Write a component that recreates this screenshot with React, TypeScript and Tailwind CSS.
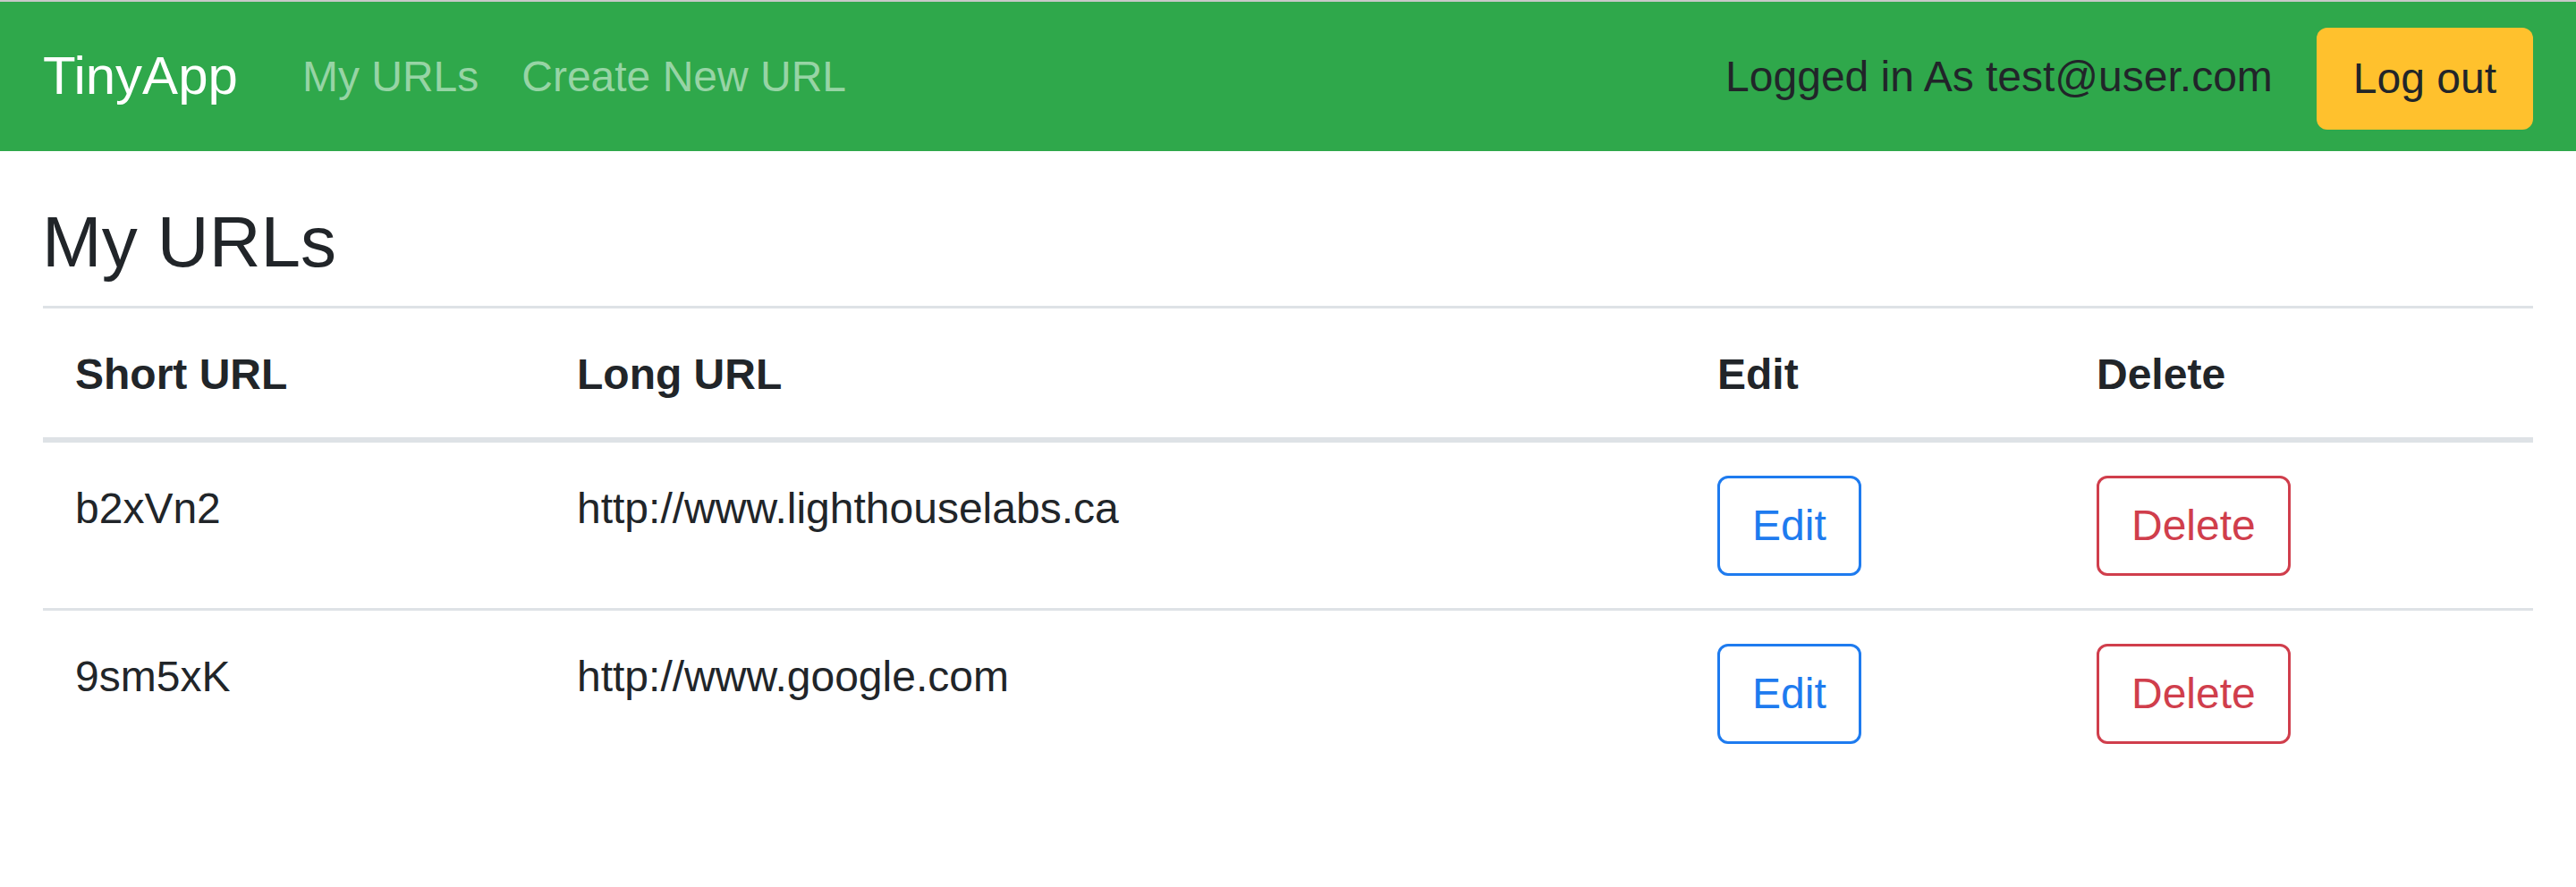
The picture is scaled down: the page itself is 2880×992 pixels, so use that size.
import React from "react";

const rows = [
  { short: "b2xVn2", long: "http://www.lighthouselabs.ca" },
  { short: "9sm5xK", long: "http://www.google.com" },
];

export default function App() {
  return (
    <div className="min-h-[992px] bg-white text-[#212529] font-['Liberation_Sans',Arial,sans-serif]">
      <nav className="h-[169px] border-t-2 border-[#c8c8c8] bg-[#2fa84b] px-[48px] flex items-center">
        <span className="text-[60px] leading-[90px] text-white mr-[48px] -mt-[2px]">TinyApp</span>
        <a className="text-[48px] leading-[72px] text-[#97d4a5] px-[24px]">My URLs</a>
        <a className="text-[48px] leading-[72px] text-[#97d4a5] px-[24px]">Create New URL</a>
        <div className="ml-auto flex items-center">
          <span className="text-[48px] leading-[72px] text-[#212529] mr-[49px]">Logged in As test@user.com</span>
          <button className="h-[114px] px-[41px] rounded-[12px] bg-[#ffc12d] text-[48px] leading-[72px] text-[#212529] mt-[4px]">
            Log out
          </button>
        </div>
      </nav>
      <main className="px-[48px] pt-[54px]">
        <h1 className="text-[80px] leading-[96px] font-normal mb-[23px] -ml-[1px]">My URLs</h1>
        <table className="w-full border-collapse text-[48px] leading-[72px]">
          <colgroup>
            <col className="w-[561px]" />
            <col className="w-[1275px]" />
            <col className="w-[424px]" />
            <col />
          </colgroup>
          <thead>
            <tr className="border-t-[3px] border-[#dee2e6]">
              <th className="text-left font-bold px-[36px] pt-[38px] pb-[34px] align-bottom border-b-[6px] border-[#dee2e6]">Short URL</th>
              <th className="text-left font-bold px-[36px] pt-[38px] pb-[34px] align-bottom border-b-[6px] border-[#dee2e6]">Long URL</th>
              <th className="text-left font-bold px-[36px] pt-[38px] pb-[34px] align-bottom border-b-[6px] border-[#dee2e6]">Edit</th>
              <th className="text-left font-bold px-[36px] pt-[38px] pb-[34px] align-bottom border-b-[6px] border-[#dee2e6]">Delete</th>
            </tr>
          </thead>
          <tbody>
            {rows.map((r, i) => (
              <tr key={r.short} className={i === 0 ? "border-b-[3px] border-[#dee2e6]" : ""}>
                <td className="px-[36px] pt-[38px] pb-[36px] align-top">{r.short}</td>
                <td className="px-[36px] pt-[38px] pb-[36px] align-top">{r.long}</td>
                <td className="px-[36px] pt-[37px] pb-[36px] align-top">
                  <button className="h-[112px] px-[36px] border-[3px] border-[#1e7bef] rounded-[12px] text-[#1e7bef] text-[48px] leading-[72px]">
                    Edit
                  </button>
                </td>
                <td className="px-[36px] pt-[37px] pb-[36px] align-top">
                  <button className="h-[112px] px-[36px] border-[3px] border-[#d03e4c] rounded-[12px] text-[#d03e4c] text-[48px] leading-[72px]">
                    Delete
                  </button>
                </td>
              </tr>
            ))}
          </tbody>
        </table>
      </main>
    </div>
  );
}
